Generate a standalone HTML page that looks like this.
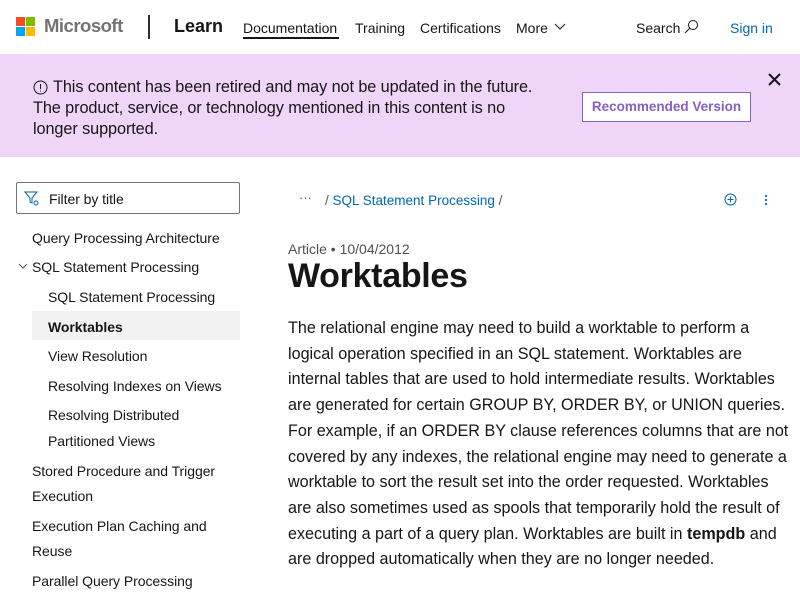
<!DOCTYPE html>
<html><head><meta charset="utf-8"><style>
*{margin:0;padding:0;box-sizing:border-box}
body{width:800px;height:600px;overflow:hidden;font-family:"Liberation Sans",sans-serif;color:#161616;background:#fff;position:relative}
.a{position:absolute;white-space:nowrap}
.nav{font-size:14px;color:#161616}
.side{font-size:14px;color:#161616;letter-spacing:-0.05px}
.body{position:absolute;left:288px;top:316px;font-size:16.15px;line-height:25.7px;color:#161616;white-space:nowrap}
</style></head><body>
<!-- header -->
<div class="a" style="left:16px;top:17px;width:9px;height:9px;background:#f25022"></div>
<div class="a" style="left:26px;top:17px;width:9px;height:9px;background:#7fba00"></div>
<div class="a" style="left:16px;top:27px;width:9px;height:9px;background:#00a4ef"></div>
<div class="a" style="left:26px;top:27px;width:9px;height:9px;background:#ffb900"></div>
<div class="a" style="left:44px;top:15px;font-size:18.5px;font-weight:bold;color:#737373;letter-spacing:-0.5px">Microsoft</div>
<div class="a" style="left:148px;top:15px;width:2px;height:24px;background:#2f2f2f"></div>
<div class="a" style="left:174px;top:16px;font-size:18px;font-weight:bold;color:#161616">Learn</div>
<div class="a nav" style="left:243px;top:20px">Documentation</div>
<div class="a" style="left:243px;top:37px;width:96px;height:2px;background:#161616"></div>
<div class="a nav" style="left:355px;top:20px">Training</div>
<div class="a nav" style="left:420px;top:20px">Certifications</div>
<div class="a nav" style="left:516px;top:20px">More</div>
<svg class="a" style="left:554px;top:23px" width="12" height="8"><path d="M1 1l5 5 5-5" stroke="#161616" fill="none"/></svg>
<div class="a nav" style="left:636px;top:20px">Search</div>
<svg class="a" style="left:683px;top:19px" width="16" height="16"><circle cx="10" cy="6" r="4.5" stroke="#161616" fill="none"/><path d="M7 9l-5 5" stroke="#161616"/></svg>
<div class="a nav" style="left:730px;top:20px;color:#0065b3">Sign in</div>
<!-- banner -->
<div class="a" style="left:0;top:54px;width:800px;height:103px;background:#efd6f8"></div>
<svg class="a" style="left:33px;top:80px" width="15" height="15"><circle cx="7.5" cy="7.5" r="6.5" stroke="#161616" fill="none"/><path d="M7.5 4v5M7.5 10.5v1" stroke="#161616"/></svg>
<div class="a" style="left:33px;top:77px;font-size:16.3px;line-height:21px;color:#161616;letter-spacing:-0.1px"><span style="padding-left:20px">This content has been retired and may not be updated in the future.</span><br>The product, service, or technology mentioned in this content is no<br>longer supported.</div>
<div class="a" style="left:582px;top:92px;width:169px;height:30px;border:1px solid #8661c5;background:#fff;color:#8661c5;font-size:13.5px;font-weight:bold;text-align:center;line-height:28px">Recommended Version</div>
<svg class="a" style="left:768px;top:73px" width="13" height="13"><path d="M1 1l11 11M12 1L1 12" stroke="#161616" stroke-width="2"/></svg>
<!-- sidebar -->
<div class="a" style="left:16px;top:182px;width:224px;height:32px;border:1px solid #757575;border-radius:2px"></div>
<svg class="a" style="left:24px;top:191px" width="16" height="16"><path d="M1 1h12l-5 6v5l-2-1V7z" stroke="#0065b3" fill="none"/><circle cx="12" cy="12" r="2" stroke="#0065b3" fill="none"/></svg>
<div class="a side" style="left:49px;top:191px;font-size:14px">Filter by title</div>
<div class="a side" style="left:32px;top:230px">Query Processing Architecture</div>
<svg class="a" style="left:18px;top:263px" width="10" height="7"><path d="M1 1l4 4 4-4" stroke="#555" fill="none"/></svg>
<div class="a side" style="left:32px;top:259px">SQL Statement Processing</div>
<div class="a side" style="left:48px;top:289px">SQL Statement Processing</div>
<div class="a" style="left:32px;top:311px;width:208px;height:29px;background:#f2f2f2"></div>
<div class="a side" style="left:48px;top:319px;font-weight:bold">Worktables</div>
<div class="a side" style="left:48px;top:348px">View Resolution</div>
<div class="a side" style="left:48px;top:378px">Resolving Indexes on Views</div>
<div class="a side" style="left:48px;top:407px">Resolving Distributed</div>
<div class="a side" style="left:48px;top:433px">Partitioned Views</div>
<div class="a side" style="left:32px;top:463px">Stored Procedure and Trigger</div>
<div class="a side" style="left:32px;top:488px">Execution</div>
<div class="a side" style="left:32px;top:518px">Execution Plan Caching and</div>
<div class="a side" style="left:32px;top:543px">Reuse</div>
<div class="a side" style="left:32px;top:573px">Parallel Query Processing</div>
<!-- content -->
<div class="a" style="left:299px;top:190px;font-size:13px;color:#555">···</div>
<div class="a" style="left:325px;top:193px;font-size:13.5px;color:#555">/ <span style="color:#0065b3">SQL Statement Processing</span> /</div>
<svg class="a" style="left:724px;top:193px" width="13" height="13"><circle cx="6.5" cy="6.5" r="5.5" stroke="#0065b3" fill="none"/><path d="M6.5 3.5v6M3.5 6.5h6" stroke="#0065b3"/></svg>
<svg class="a" style="left:764px;top:194px" width="4" height="12"><circle cx="2" cy="2" r="1.1" fill="#0065b3"/><circle cx="2" cy="6" r="1.1" fill="#0065b3"/><circle cx="2" cy="10" r="1.1" fill="#0065b3"/></svg>
<div class="a" style="left:288px;top:241px;font-size:14px;color:#505050">Article • 10/04/2012</div>
<div class="a" style="left:288px;top:257px;font-size:34px;font-weight:bold;color:#161616;letter-spacing:-0.3px">Worktables</div>
<div class="body">The relational engine may need to build a worktable to perform a<br>logical operation specified in an SQL statement. Worktables are<br>internal tables that are used to hold intermediate results. Worktables<br>are generated for certain GROUP BY, ORDER BY, or UNION queries.<br>For example, if an ORDER BY clause references columns that are not<br>covered by any indexes, the relational engine may need to generate a<br>worktable to sort the result set into the order requested. Worktables<br>are also sometimes used as spools that temporarily hold the result of<br>executing a part of a query plan. Worktables are built in <b>tempdb</b> and<br>are dropped automatically when they are no longer needed.</div>
</body></html>
